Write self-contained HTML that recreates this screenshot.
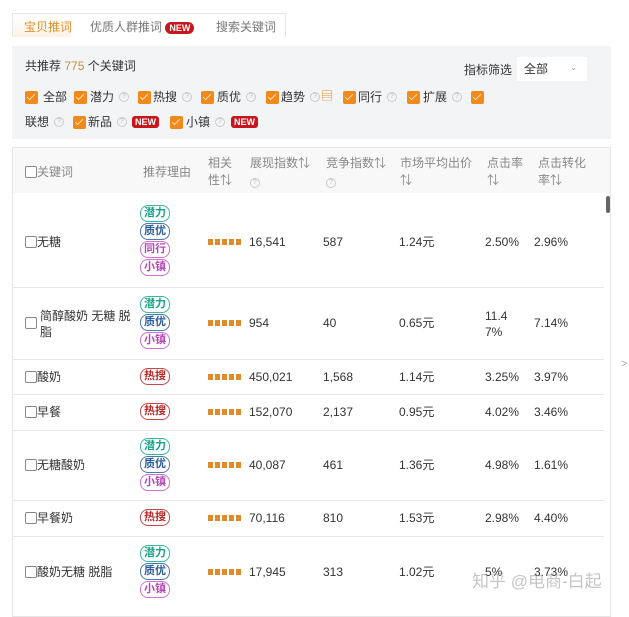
<!DOCTYPE html><html><head><meta charset="utf-8"><style>
*{margin:0;padding:0;box-sizing:border-box}
body{width:629px;height:607px;overflow:hidden;background:#fff;font-family:"Liberation Sans","Noto Sans CJK SC",sans-serif;font-size:12px;color:#333;position:relative}
.a{position:absolute;white-space:nowrap;line-height:14px}
.new{background:#c8161d;color:#fff;font-size:9px;font-weight:bold;padding:0 3px;border-radius:3px;line-height:12px;display:inline-block}
.cb{position:absolute;width:13px;height:13px;background:#f08a1c;border-radius:2px}
.cb:after{content:"";position:absolute;left:4px;top:1px;width:3px;height:7px;border:solid #fde0b0;border-width:0 1.5px 1.5px 0;transform:rotate(45deg)}
.q{position:absolute;width:10px;height:10px;border:1px solid #ccc;border-radius:50%;font-size:7px;color:#bbb;text-align:center;line-height:8px}
.ec{display:inline-block;width:12px;height:12px;border:1px solid #888;border-radius:2px;background:#fff;vertical-align:-2px}
.tag{position:absolute;width:30px;height:17px;border:1.5px solid;border-radius:8px;font-size:11px;font-weight:bold;text-align:center;line-height:14px;background:#fff}
.g{color:#1aa38a;border-color:#37b89b}.b{color:#2a5d9a;border-color:#4a78b0}.p{color:#b548b5;border-color:#d070d0}.r{color:#b52828;border-color:#c84848}
.st{position:absolute;width:33px;height:6px;background:repeating-linear-gradient(90deg,#e08a2a 0 5px,transparent 5px 7px)}
.ln{position:absolute;left:13px;width:591px;height:1px;background:#e8e8e8}
.h{color:#888;line-height:17px}
</style></head><body>
<div class="a" style="left:12px;top:13px;width:274px;height:24px;border:1px solid #e6e6e6;border-bottom:none;background:#fff"></div>
<div class="a" style="left:13px;top:14px;width:58px;height:23px;background:linear-gradient(#fff,#fdf3e6)"></div>
<div class="a" style="left:24px;top:20px;color:#e0902a">宝贝推词</div>
<div class="a" style="left:90px;top:20px;color:#777">优质人群推词 <span class="new" style="border-radius:6px;padding:0 4px">NEW</span></div>
<div class="a" style="left:216px;top:20px;color:#777">搜索关键词</div>
<div class="a" style="left:12px;top:46px;width:599px;height:93px;background:#f3f4f6"></div>
<div class="a" style="left:25px;top:59px">共推荐 <span style="color:#c09040">775</span> 个关键词</div>
<div class="a" style="left:464px;top:63px">指标筛选</div>
<div class="a" style="left:517px;top:57px;width:70px;height:24px;background:#fff;padding:5px 7px">全部<span style="position:absolute;right:10px;top:4px;font-size:8px;color:#999">⌄</span></div>
<!-- filter row 1 -->
<span class="cb" style="left:25px;top:91px"></span><div class="a" style="left:43px;top:90px">全部</div>
<span class="cb" style="left:74px;top:91px"></span><div class="a" style="left:90px;top:90px">潜力</div><span class="q" style="left:119px;top:92px">?</span>
<span class="cb" style="left:138px;top:91px"></span><div class="a" style="left:153px;top:90px">热搜</div><span class="q" style="left:182px;top:92px">?</span>
<span class="cb" style="left:201px;top:91px"></span><div class="a" style="left:217px;top:90px">质优</div><span class="q" style="left:246px;top:92px">?</span>
<span class="cb" style="left:266px;top:91px"></span><div class="a" style="left:281px;top:90px">趋势</div><span class="q" style="left:310px;top:92px">?</span><div class="a" style="left:321px;top:89px;color:#e0902a">▤</div>
<span class="cb" style="left:343px;top:91px"></span><div class="a" style="left:358px;top:90px">同行</div><span class="q" style="left:387px;top:92px">?</span>
<span class="cb" style="left:407px;top:91px"></span><div class="a" style="left:423px;top:90px">扩展</div><span class="q" style="left:452px;top:92px">?</span>
<span class="cb" style="left:471px;top:91px"></span>
<!-- filter row 2 -->
<div class="a" style="left:25px;top:115px">联想</div><span class="q" style="left:54px;top:117px">?</span>
<span class="cb" style="left:73px;top:116px"></span><div class="a" style="left:88px;top:115px">新品</div><span class="q" style="left:117px;top:117px">?</span><span class="a new" style="left:132px;top:116px">NEW</span>
<span class="cb" style="left:170px;top:116px"></span><div class="a" style="left:186px;top:115px">小镇</div><span class="q" style="left:215px;top:117px">?</span><span class="a new" style="left:231px;top:116px">NEW</span>
<!-- table -->
<div class="a" style="left:12px;top:147px;width:599px;height:470px;border:1px solid #e6e6e6"></div>
<div class="a" style="left:13px;top:148px;width:597px;height:45px;background:#f8f8f8"></div>
<div class="a h" style="left:25px;top:164px"><span class="ec"></span>关键词</div>
<div class="a h" style="left:143px;top:164px">推荐理由</div>
<div class="a h" style="left:208px;top:155px">相关<br>性⇅</div>
<div class="a h" style="left:250px;top:155px">展现指数⇅<br><span style="display:inline-block;width:10px;height:10px;border:1px solid #ccc;border-radius:50%;font-size:7px;color:#bbb;text-align:center;line-height:8px">?</span></div>
<div class="a h" style="left:326px;top:155px">竞争指数⇅<br><span style="display:inline-block;width:10px;height:10px;border:1px solid #ccc;border-radius:50%;font-size:7px;color:#bbb;text-align:center;line-height:8px">?</span></div>
<div class="a h" style="left:400px;top:155px">市场平均出价<br>⇅</div>
<div class="a h" style="left:487px;top:155px">点击率<br>⇅</div>
<div class="a h" style="left:538px;top:155px">点击转化<br>率⇅</div>
<div class="a" style="left:606px;top:196px;width:4px;height:17px;background:#666;border-radius:2px"></div>
<div class="a" style="left:621px;top:357px;color:#aaa;font-size:11px">&gt;</div>

<div class="ln" style="top:287px"></div><div class="ln" style="top:359px"></div><div class="ln" style="top:394px"></div><div class="ln" style="top:430px"></div><div class="ln" style="top:500px"></div><div class="ln" style="top:536px"></div>

<div class="a" style="left:25px;top:235px"><span class="ec"></span>无糖</div>
<div class="tag g" style="left:140px;top:205px">潜力</div><div class="tag b" style="left:140px;top:223px">质优</div><div class="tag p" style="left:140px;top:241px">同行</div><div class="tag p" style="left:140px;top:259px">小镇</div>
<div class="st" style="left:208px;top:239px"></div>
<div class="a" style="left:249px;top:235px">16,541</div><div class="a" style="left:323px;top:235px">587</div><div class="a" style="left:399px;top:235px">1.24元</div><div class="a" style="left:485px;top:235px">2.50%</div><div class="a" style="left:534px;top:235px">2.96%</div>

<div class="a" style="left:25px;top:308px;line-height:16px"><span class="ec" style="position:absolute;left:0;top:9px"></span><span style="display:block;padding-left:15px">简醇酸奶 无糖 脱</span><span style="display:block;padding-left:15px">脂</span></div>
<div class="tag g" style="left:140px;top:296px">潜力</div><div class="tag b" style="left:140px;top:314px">质优</div><div class="tag p" style="left:140px;top:332px">小镇</div>
<div class="st" style="left:208px;top:320px"></div>
<div class="a" style="left:249px;top:316px">954</div><div class="a" style="left:323px;top:316px">40</div><div class="a" style="left:399px;top:316px">0.65元</div><div class="a" style="left:485px;top:308px;line-height:16px">11.4<br>7%</div><div class="a" style="left:534px;top:316px">7.14%</div>

<div class="a" style="left:25px;top:370px"><span class="ec"></span>酸奶</div>
<div class="tag r" style="left:140px;top:368px">热搜</div>
<div class="st" style="left:208px;top:374px"></div>
<div class="a" style="left:249px;top:370px">450,021</div><div class="a" style="left:323px;top:370px">1,568</div><div class="a" style="left:399px;top:370px">1.14元</div><div class="a" style="left:485px;top:370px">3.25%</div><div class="a" style="left:534px;top:370px">3.97%</div>

<div class="a" style="left:25px;top:405px"><span class="ec"></span>早餐</div>
<div class="tag r" style="left:140px;top:403px">热搜</div>
<div class="st" style="left:208px;top:409px"></div>
<div class="a" style="left:249px;top:405px">152,070</div><div class="a" style="left:323px;top:405px">2,137</div><div class="a" style="left:399px;top:405px">0.95元</div><div class="a" style="left:485px;top:405px">4.02%</div><div class="a" style="left:534px;top:405px">3.46%</div>

<div class="a" style="left:25px;top:458px"><span class="ec"></span>无糖酸奶</div>
<div class="tag g" style="left:140px;top:438px">潜力</div><div class="tag b" style="left:140px;top:456px">质优</div><div class="tag p" style="left:140px;top:474px">小镇</div>
<div class="st" style="left:208px;top:462px"></div>
<div class="a" style="left:249px;top:458px">40,087</div><div class="a" style="left:323px;top:458px">461</div><div class="a" style="left:399px;top:458px">1.36元</div><div class="a" style="left:485px;top:458px">4.98%</div><div class="a" style="left:534px;top:458px">1.61%</div>

<div class="a" style="left:25px;top:511px"><span class="ec"></span>早餐奶</div>
<div class="tag r" style="left:140px;top:509px">热搜</div>
<div class="st" style="left:208px;top:515px"></div>
<div class="a" style="left:249px;top:511px">70,116</div><div class="a" style="left:323px;top:511px">810</div><div class="a" style="left:399px;top:511px">1.53元</div><div class="a" style="left:485px;top:511px">2.98%</div><div class="a" style="left:534px;top:511px">4.40%</div>

<div class="a" style="left:25px;top:565px"><span class="ec"></span>酸奶无糖 脱脂</div>
<div class="tag g" style="left:140px;top:545px">潜力</div><div class="tag b" style="left:140px;top:563px">质优</div><div class="tag p" style="left:140px;top:581px">小镇</div>
<div class="st" style="left:208px;top:569px"></div>
<div class="a" style="left:249px;top:565px">17,945</div><div class="a" style="left:323px;top:565px">313</div><div class="a" style="left:399px;top:565px">1.02元</div><div class="a" style="left:485px;top:565px">5%</div><div class="a" style="left:534px;top:565px">3.73%</div>
<div class="a" style="left:472px;top:572px;font-size:17px;line-height:20px;color:rgba(150,150,150,0.55)">知乎 @电商-白起</div>
</body></html>
